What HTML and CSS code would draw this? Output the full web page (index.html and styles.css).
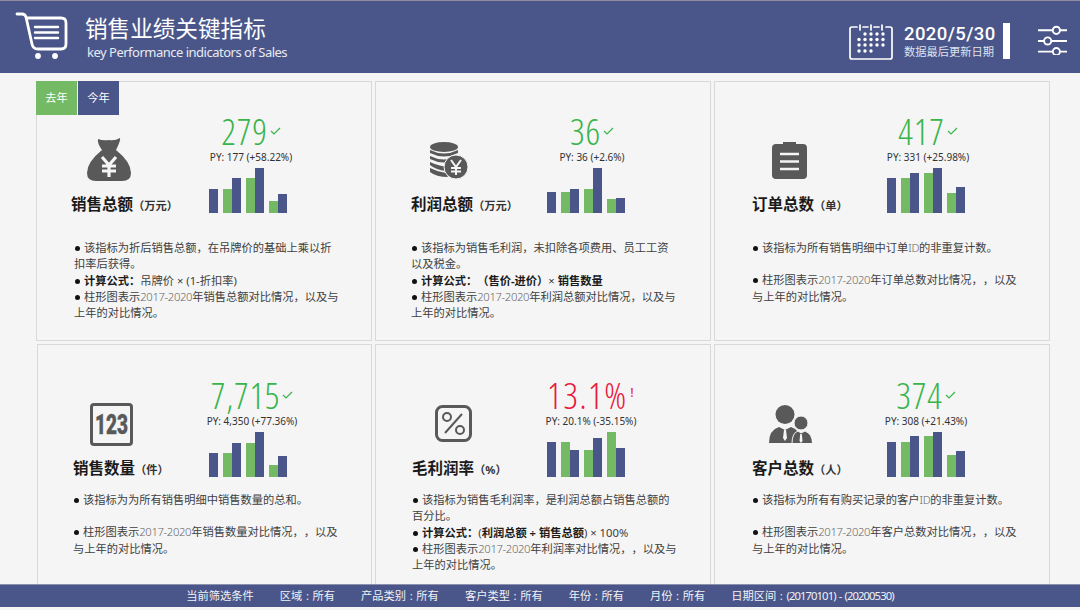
FILE: index.html
```html
<!DOCTYPE html>
<html lang="zh-CN">
<head>
    <meta charset="UTF-8">
    <title>销售业绩关键指标</title>
    <link rel="stylesheet" href="styles.css">
</head>
<body>
    <header class="topbar">
        <svg class="cart" viewBox="0 0 53 48" fill="none" stroke="#fff" stroke-width="2.800" stroke-linecap="round" stroke-linejoin="round">
            <path d="M2 2 H7 Q10 2 11 5 L17 32 Q18 37 23 37 H46 Q51 37 51 32 V11 Q51 6 46 6 H13"/>
            <path d="M20 15 H43 M20 20.500 H43 M20 26 H43" stroke-width="2.400"/>
            <circle cx="23" cy="44" r="1.500" fill="#fff"/>
            <circle cx="40" cy="44" r="1.500" fill="#fff"/>
        </svg>
        <div class="brand">
            <h1>销售业绩关键指标</h1>
            <p>key Performance indicators of Sales</p>
        </div>
        <svg class="calendar" viewBox="0 0 44 36" fill="none" stroke="#fff" stroke-width="1.700" stroke-linecap="round">
            <path d="M8 3 H3 Q1 3 1 5 V33 Q1 35 3 35 H41 Q43 35 43 33 V5 Q43 3 41 3 H37 M14 3 H19 M25 3 H30"/>
            <path d="M11 1 V6 M22 1 V6 M33 1 V6"/>
            <g fill="#fff" stroke="none">
                <circle cx="16" cy="10" r="1.700"/><circle cx="22" cy="10" r="1.700"/><circle cx="28" cy="10" r="1.700"/><circle cx="34" cy="10" r="1.700"/>
                <circle cx="10" cy="15.500" r="1.700"/><circle cx="16" cy="15.500" r="1.700"/><circle cx="22" cy="15.500" r="1.700"/><circle cx="28" cy="15.500" r="1.700"/><circle cx="34" cy="15.500" r="1.700"/>
                <circle cx="10" cy="21" r="1.700"/><circle cx="16" cy="21" r="1.700"/><circle cx="22" cy="21" r="1.700"/><circle cx="28" cy="21" r="1.700"/><circle cx="34" cy="21" r="1.700"/>
                <circle cx="10" cy="27" r="1.700"/><circle cx="16" cy="27" r="1.700"/><circle cx="22" cy="27" r="1.700"/>
            </g>
        </svg>
        <div class="updated">
            <div class="updated-date">2020/5/30</div>
            <div class="updated-label">数据最后更新日期</div>
        </div>
        <div class="divider"></div>
        <svg class="sliders" viewBox="0 0 30 30" fill="none" stroke="#fff" stroke-width="2">
            <path d="M0 5 H30 M0 16 H30 M0 27 H30"/>
            <circle cx="19" cy="5" r="3.700" fill="#4a5689"/>
            <circle cx="10" cy="16" r="3.700" fill="#4a5689"/>
            <circle cx="19" cy="27" r="3.700" fill="#4a5689"/>
        </svg>
    </header>

    <main class="board">
        <section class="card card-sales">
            <div class="tabs">
                <span class="tab tab-last">去年</span>
                <span class="tab tab-this">今年</span>
            </div>
            <div class="card-top">
                <div class="kpi-left">
                    <svg class="icon icon-bag" viewBox="0 0 44 44" fill="#595959">
                        <path d="M11 1 Q16 3 22 2 Q28 3 33 0 Q34 2 29 12 Q44 24 44 35 Q44 43 35 43 H9 Q0 43 0 35 Q0 24 15 12 Q10 5 11 1 Z"/>
                        <path d="M15 19 L22 27 L29 19 M22 27 V39 M15 28 H29 M15 33 H29" fill="none" stroke="#f5f5f5" stroke-width="3.200"/>
                    </svg>
                    <h2>销售总额<small>（万元）</small></h2>
                </div>
                <div class="kpi-right">
                    <div class="value">279<svg class="mark" viewBox="0 0 11 8"><path d="M1 4 L4 7 L10 1"/></svg></div>
                    <div class="py">PY: 177 (+58.22%)</div>
                    <div class="bars">
                        <div class="group"><i class="bar now" style="height:24px"></i></div>
                        <div class="group"><i class="bar last" style="height:24px"></i><i class="bar now" style="height:35px"></i></div>
                        <div class="group"><i class="bar last" style="height:35px"></i><i class="bar now" style="height:45px"></i></div>
                        <div class="group"><i class="bar last" style="height:12px"></i><i class="bar now" style="height:19px"></i></div>
                    </div>
                </div>
            </div>
            <div class="desc">
                <p><b class="dot"></b>该指标为折后销售总额，在吊牌价的基础上乘以折扣率后获得。</p>
                <p><b class="dot"></b><strong>计算公式：</strong>吊牌价 × (1-折扣率)</p>
                <p><b class="dot"></b>柱形图表示<span class="latin">2017-2020</span>年销售总额对比情况，以及与<br>上年的对比情况。</p>
            </div>
        </section>

        <section class="card card-profit">
            <div class="card-top">
                <div class="kpi-left">
                    <svg class="icon icon-coins" viewBox="0 0 38 37" fill="#595959">
                        <ellipse cx="14" cy="5" rx="14" ry="5"/>
                        <path d="M0 8 Q14 15 28 8 V11 Q14 18 0 11 Z"/>
                        <path d="M0 14 Q14 21 28 14 V17 Q14 24 0 17 Z"/>
                        <path d="M0 20 Q10 25 18 24 L16 29 Q6 28 0 23 Z"/>
                        <path d="M0 26 Q8 30 16 31 L18 35 Q6 35 0 30 Z"/>
                        <circle cx="26" cy="25" r="12" stroke="#f5f5f5" stroke-width="1"/>
                        <path d="M21 18 L26 25 L31 18 M26 25 V33 M21 26 H31 M21 29.500 H31" fill="none" stroke="#f5f5f5" stroke-width="2"/>
                    </svg>
                    <h2>利润总额<small>（万元）</small></h2>
                </div>
                <div class="kpi-right">
                    <div class="value">36<svg class="mark" viewBox="0 0 11 8"><path d="M1 4 L4 7 L10 1"/></svg></div>
                    <div class="py">PY: 36 (+2.6%)</div>
                    <div class="bars">
                        <div class="group"><i class="bar now" style="height:21px"></i></div>
                        <div class="group"><i class="bar last" style="height:21px"></i><i class="bar now" style="height:24px"></i></div>
                        <div class="group"><i class="bar last" style="height:24px"></i><i class="bar now" style="height:45px"></i></div>
                        <div class="group"><i class="bar last" style="height:14px"></i><i class="bar now" style="height:15px"></i></div>
                    </div>
                </div>
            </div>
            <div class="desc">
                <p><b class="dot"></b>该指标为销售毛利润，未扣除各项费用、员工工资以及税金。</p>
                <p><b class="dot"></b><strong>计算公式：（售价-进价）</strong>× <strong>销售数量</strong></p>
                <p><b class="dot"></b>柱形图表示<span class="latin">2017-2020</span>年利润总额对比情况，以及与<br>上年的对比情况。</p>
            </div>
        </section>

        <section class="card card-orders">
            <div class="card-top">
                <div class="kpi-left">
                    <svg class="icon icon-clip" viewBox="0 0 35 37">
                        <path d="M4 2 H11 V0 H24 V2 H31 Q35 2 35 6 V33 Q35 37 31 37 H4 Q0 37 0 33 V6 Q0 2 4 2 Z" fill="#595959"/>
                        <path d="M8 12 H27 M8 19.500 H27 M8 27 H27" stroke="#f5f5f5" stroke-width="2.500"/>
                    </svg>
                    <h2>订单总数<small>（单）</small></h2>
                </div>
                <div class="kpi-right">
                    <div class="value">417<svg class="mark" viewBox="0 0 11 8"><path d="M1 4 L4 7 L10 1"/></svg></div>
                    <div class="py">PY: 331 (+25.98%)</div>
                    <div class="bars">
                        <div class="group"><i class="bar now" style="height:35px"></i></div>
                        <div class="group"><i class="bar last" style="height:35px"></i><i class="bar now" style="height:40px"></i></div>
                        <div class="group"><i class="bar last" style="height:40px"></i><i class="bar now" style="height:45px"></i></div>
                        <div class="group"><i class="bar last" style="height:20px"></i><i class="bar now" style="height:26px"></i></div>
                    </div>
                </div>
            </div>
            <div class="desc">
                <p><b class="dot"></b>该指标为所有销售明细中订单<span class="latin">ID</span>的非重复计数。</p>
                <p class="blank"></p>
                <p><b class="dot"></b>柱形图表示<span class="latin">2017-2020</span>年订单总数对比情况，，以及<br>与上年的对比情况。</p>
            </div>
        </section>

        <section class="card card-qty">
            <div class="card-top">
                <div class="kpi-left">
                    <svg class="icon icon-num" viewBox="0 0 43 43">
                        <rect x="1.500" y="1.500" width="40" height="40" rx="2.500" fill="none" stroke="#595959" stroke-width="3"/>
                        <text x="5" y="31" textLength="33" lengthAdjust="spacingAndGlyphs" class="icon-num-text">123</text>
                    </svg>
                    <h2>销售数量<small>（件）</small></h2>
                </div>
                <div class="kpi-right">
                    <div class="value">7,715<svg class="mark" viewBox="0 0 11 8"><path d="M1 4 L4 7 L10 1"/></svg></div>
                    <div class="py">PY: 4,350 (+77.36%)</div>
                    <div class="bars">
                        <div class="group"><i class="bar now" style="height:24px"></i></div>
                        <div class="group"><i class="bar last" style="height:24px"></i><i class="bar now" style="height:34px"></i></div>
                        <div class="group"><i class="bar last" style="height:34px"></i><i class="bar now" style="height:45px"></i></div>
                        <div class="group"><i class="bar last" style="height:12px"></i><i class="bar now" style="height:21px"></i></div>
                    </div>
                </div>
            </div>
            <div class="desc">
                <p><b class="dot"></b>该指标为为所有销售明细中销售数量的总和。</p>
                <p class="blank"></p>
                <p><b class="dot"></b>柱形图表示<span class="latin">2017-2020</span>年销售数量对比情况，，以及<br>与上年的对比情况。</p>
            </div>
        </section>

        <section class="card card-margin">
            <div class="card-top">
                <div class="kpi-left">
                    <svg class="icon icon-pct" viewBox="0 0 37 37" fill="none" stroke="#595959">
                        <rect x="1.500" y="1.500" width="34" height="34" rx="6" stroke-width="3"/>
                        <circle cx="12" cy="12" r="4" stroke-width="2"/>
                        <circle cx="25" cy="25" r="4" stroke-width="2"/>
                        <path d="M27 9 L10 28" stroke-width="2"/>
                    </svg>
                    <h2>毛利润率<small>（%）</small></h2>
                </div>
                <div class="kpi-right">
                    <div class="value value-bad">13.1%<span class="alert">!</span></div>
                    <div class="py">PY: 20.1% (-35.15%)</div>
                    <div class="bars">
                        <div class="group"><i class="bar now" style="height:35px"></i></div>
                        <div class="group"><i class="bar last" style="height:35px"></i><i class="bar now" style="height:27px"></i></div>
                        <div class="group"><i class="bar last" style="height:27px"></i><i class="bar now" style="height:39px"></i></div>
                        <div class="group"><i class="bar last" style="height:45px"></i><i class="bar now" style="height:29px"></i></div>
                    </div>
                </div>
            </div>
            <div class="desc">
                <p><b class="dot"></b>该指标为销售毛利润率，是利润总额占销售总额的百分比。</p>
                <p><b class="dot"></b><strong>计算公式：</strong>(<strong>利润总额 ÷ 销售总额</strong>) × 100%</p>
                <p><b class="dot"></b>柱形图表示<span class="latin">2017-2020</span>年利润率对比情况，，以及与<br>上年的对比情况。</p>
            </div>
        </section>

        <section class="card card-customers">
            <div class="card-top">
                <div class="kpi-left">
                    <svg class="icon icon-people" viewBox="0 0 43 38" fill="#595959">
                        <circle cx="16" cy="9.500" r="9.500"/>
                        <path d="M0 38 Q0 25 10 22 L16 25 L22 22 Q32 25 32 38 Z"/>
                        <path d="M15 25 H17 L18 33 L16 36 L14 33 Z" fill="#f5f5f5"/>
                        <g stroke="#f5f5f5" stroke-width="1">
                            <circle cx="32" cy="18" r="7"/>
                            <path d="M23 38.500 Q23 28 29 26 L32 28 L36 26 Q43.500 29 43.500 38.500 Z"/>
                        </g>
                        <path d="M31.200 29 H32.800 L33.500 36 L32 38 L30.500 36 Z" fill="#f5f5f5"/>
                    </svg>
                    <h2>客户总数<small>（人）</small></h2>
                </div>
                <div class="kpi-right">
                    <div class="value">374<svg class="mark" viewBox="0 0 11 8"><path d="M1 4 L4 7 L10 1"/></svg></div>
                    <div class="py">PY: 308 (+21.43%)</div>
                    <div class="bars">
                        <div class="group"><i class="bar now" style="height:35px"></i></div>
                        <div class="group"><i class="bar last" style="height:35px"></i><i class="bar now" style="height:41px"></i></div>
                        <div class="group"><i class="bar last" style="height:41px"></i><i class="bar now" style="height:45px"></i></div>
                        <div class="group"><i class="bar last" style="height:22px"></i><i class="bar now" style="height:26px"></i></div>
                    </div>
                </div>
            </div>
            <div class="desc">
                <p><b class="dot"></b>该指标为所有有购买记录的客户<span class="latin">ID</span>的非重复计数。</p>
                <p class="blank"></p>
                <p><b class="dot"></b>柱形图表示<span class="latin">2017-2020</span>年客户总数对比情况，，以及<br>与上年的对比情况。</p>
            </div>
        </section>
    </main>

    <footer class="filters">
        <span>当前筛选条件</span>
        <span>区域 : 所有</span>
        <span>产品类别 : 所有</span>
        <span>客户类型 : 所有</span>
        <span>年份 : 所有</span>
        <span>月份 : 所有</span>
        <span>日期区间 : <span class="range">(20170101) - (20200530)</span></span>
    </footer>
</body>
</html>
```

FILE: styles.css
```css
* {
    box-sizing: border-box;
}
body {
    margin: 0;
    width: 1080px;
    height: 610px;
    overflow: hidden;
    background: #f5f5f5;
    color: #333;
    font-family: "Noto Sans", "Noto Sans CJK SC", sans-serif;
    text-spacing-trim: space-all;
    display: flex;
    flex-direction: column;
}

/* header */
.topbar {
    height: 73px;
    background: #4a5689;
    border-top: 1px solid #8c8c9c;
    color: #fff;
    display: flex;
    align-items: center;
    padding-left: 15px;
}
.cart {
    width: 53px;
    height: 48px;
    margin-top: -3px;
}
.brand {
    margin-left: 17px;
    flex: 1;
}
.brand h1 {
    margin: 0;
    font-size: 22.600px;
    font-weight: 400;
    line-height: 30px;
}
.brand p {
    margin: 0 0 0 2px;
    font-size: 13px;
    line-height: 17px;
    letter-spacing: -0.500px;
    color: #e8eaf2;
}
.calendar {
    width: 44px;
    height: 36px;
    margin-top: 10px;
}
.updated {
    margin: 8px 0 0 11px;
    width: 99px;
}
.updated-date {
    font-family: Roboto, sans-serif;
    font-size: 18.500px;
    font-weight: 500;
    line-height: 22px;
    letter-spacing: 0.400px;
}
.updated-label {
    font-size: 11.250px;
    line-height: 14px;
    color: #dfe2ec;
}
.divider {
    width: 7px;
    height: 36px;
    margin-top: 8px;
    background: #fff;
}
.sliders {
    width: 29px;
    height: 30px;
    margin: 6px 13px 0 28px;
}

/* kpi cards */
.board {
    flex: 1;
    display: grid;
    grid-template-columns: repeat(3, 336px);
    grid-template-rows: 260px 240px;
    gap: 3px;
    padding: 8px 0 0 36px;
    min-height: 0;
}
.card {
    position: relative;
    border: 1px solid #d9d9d9;
    padding-top: 31px;
}
.card-top {
    display: flex;
}
.kpi-left {
    display: flex;
    flex-direction: column;
    justify-content: flex-end;
    align-items: flex-start;
}
.kpi-left h2 {
    margin: 0 0 -3px;
    font-size: 15.500px;
    line-height: 20px;
    font-weight: 700;
    color: #1a1a1a;
    white-space: nowrap;
}
.kpi-left small {
    font-size: 11.250px;
    font-weight: 700;
    color: #333;
}
.icon {
    display: block;
}
.icon-bag {
    width: 44px;
    height: 44px;
    margin: 0 0 12px 16px;
}
.icon-coins {
    width: 38px;
    height: 37px;
    margin: 0 0 15px 19px;
}
.icon-clip {
    width: 35px;
    height: 37px;
    margin: 0 0 15px 20px;
}
.icon-num {
    width: 43px;
    height: 43px;
    margin: 0 0 12px 17px;
    overflow: visible;
}
.icon-num-text {
    font-family: Roboto, sans-serif;
    font-size: 27px;
    font-weight: 900;
    fill: #595959;
    stroke: #595959;
    stroke-width: 0.400px;
}
.icon-pct {
    width: 37px;
    height: 37px;
    margin: 0 0 16px 23px;
}
.icon-people {
    width: 43px;
    height: 38px;
    margin: 0 0 15px 17px;
}
.kpi-right {
    width: 86px;
}
.value {
    display: flex;
    justify-content: center;
    align-items: center;
    height: 36px;
    font-family: "Open Sans", sans-serif;
    font-stretch: 75%;
    font-size: 36px;
    font-weight: 300;
    letter-spacing: 0.800px;
    color: #38b44a;
    white-space: nowrap;
}
.value-bad {
    letter-spacing: 1.500px;
    color: #e8193c;
}
.mark {
    width: 11px;
    height: 8px;
    margin-left: 2px;
    fill: none;
    stroke: #38b44a;
    stroke-width: 1.200px;
    flex: none;
}
.alert {
    font-size: 12px;
    font-weight: 600;
    margin: -6px 0 0 3px;
}
.py {
    display: flex;
    justify-content: center;
    height: 14px;
    margin-top: 1px;
    font-size: 10px;
    line-height: 14px;
    color: #333;
    white-space: nowrap;
}
.bars {
    display: flex;
    align-items: flex-end;
    gap: 5px;
    height: 45px;
    margin-top: 4px;
}
.group {
    display: flex;
    align-items: flex-end;
}
.bar {
    display: block;
    width: 9px;
}
.bar.now {
    background: #4a5689;
}
.bar.last {
    background: #74b963;
}
.desc {
    width: 268px;
    margin-top: 27px;
    font-size: 11.250px;
    line-height: 16.300px;
    color: #404040;
}
.desc p {
    margin: 0;
}
.desc .blank {
    height: 16px;
}
.desc strong {
    color: #1a1a1a;
}
.latin {
    font-weight: 300;
    letter-spacing: -0.350px;
    color: #666;
}
.dot {
    display: inline-block;
    width: 5px;
    height: 5px;
    margin: 0 4px 1px 1px;
    border-radius: 50%;
    background: #111;
}

/* per-card offsets, the columns are not quite aligned in the source */
.card-sales {
    padding-left: 34px;
}
.card-sales .kpi-left {
    width: 138px;
}
.card-sales .kpi-right {
    width: 84px;
}
.card-sales .desc {
    margin-left: 3px;
}
.card-profit {
    padding-left: 35px;
}
.card-profit .kpi-left {
    width: 136px;
}
.card-profit .kpi-right {
    width: 90px;
}
.card-orders {
    padding-left: 37px;
}
.card-orders .kpi-left {
    width: 135px;
}
.card-orders .kpi-right {
    width: 82px;
}
.card-qty {
    margin-left: 1px;
    padding-left: 35px;
}
.card-qty .kpi-left {
    width: 136px;
}
.card-margin {
    padding-left: 36px;
}
.card-margin .kpi-left {
    width: 135px;
}
.card-margin .kpi-right {
    width: 88px;
}
.card-customers {
    padding-left: 37px;
}
.card-customers .kpi-left {
    width: 135px;
}
.card-customers .kpi-right {
    width: 78px;
}
.card-qty,
.card-margin,
.card-customers {
    padding-top: 32px;
    border-bottom: none;
}
.card-qty .desc,
.card-margin .desc,
.card-customers .desc {
    margin-top: 15px;
}

/* legend tabs sit over the first card */
.tabs {
    position: absolute;
    top: -1px;
    left: -1px;
    display: flex;
    gap: 1px;
}
.tab {
    width: 41px;
    height: 34px;
    font-size: 11.250px;
    line-height: 34px;
    text-align: center;
    color: #fff;
}
.tab-last {
    background: #74b963;
}
.tab-this {
    background: #4a5689;
}

/* filter strip */
.filters {
    height: 23px;
    margin-bottom: 3px;
    padding-bottom: 2px;
    background: #4a5689;
    border-top: 1px solid #8c90ad;
    color: #f0f1f6;
    font-size: 11.250px;
    word-spacing: 0.700px;
    display: flex;
    justify-content: center;
    align-items: center;
    gap: 26px;
}
.range {
    letter-spacing: -0.900px;
    word-spacing: 1px;
}
```
